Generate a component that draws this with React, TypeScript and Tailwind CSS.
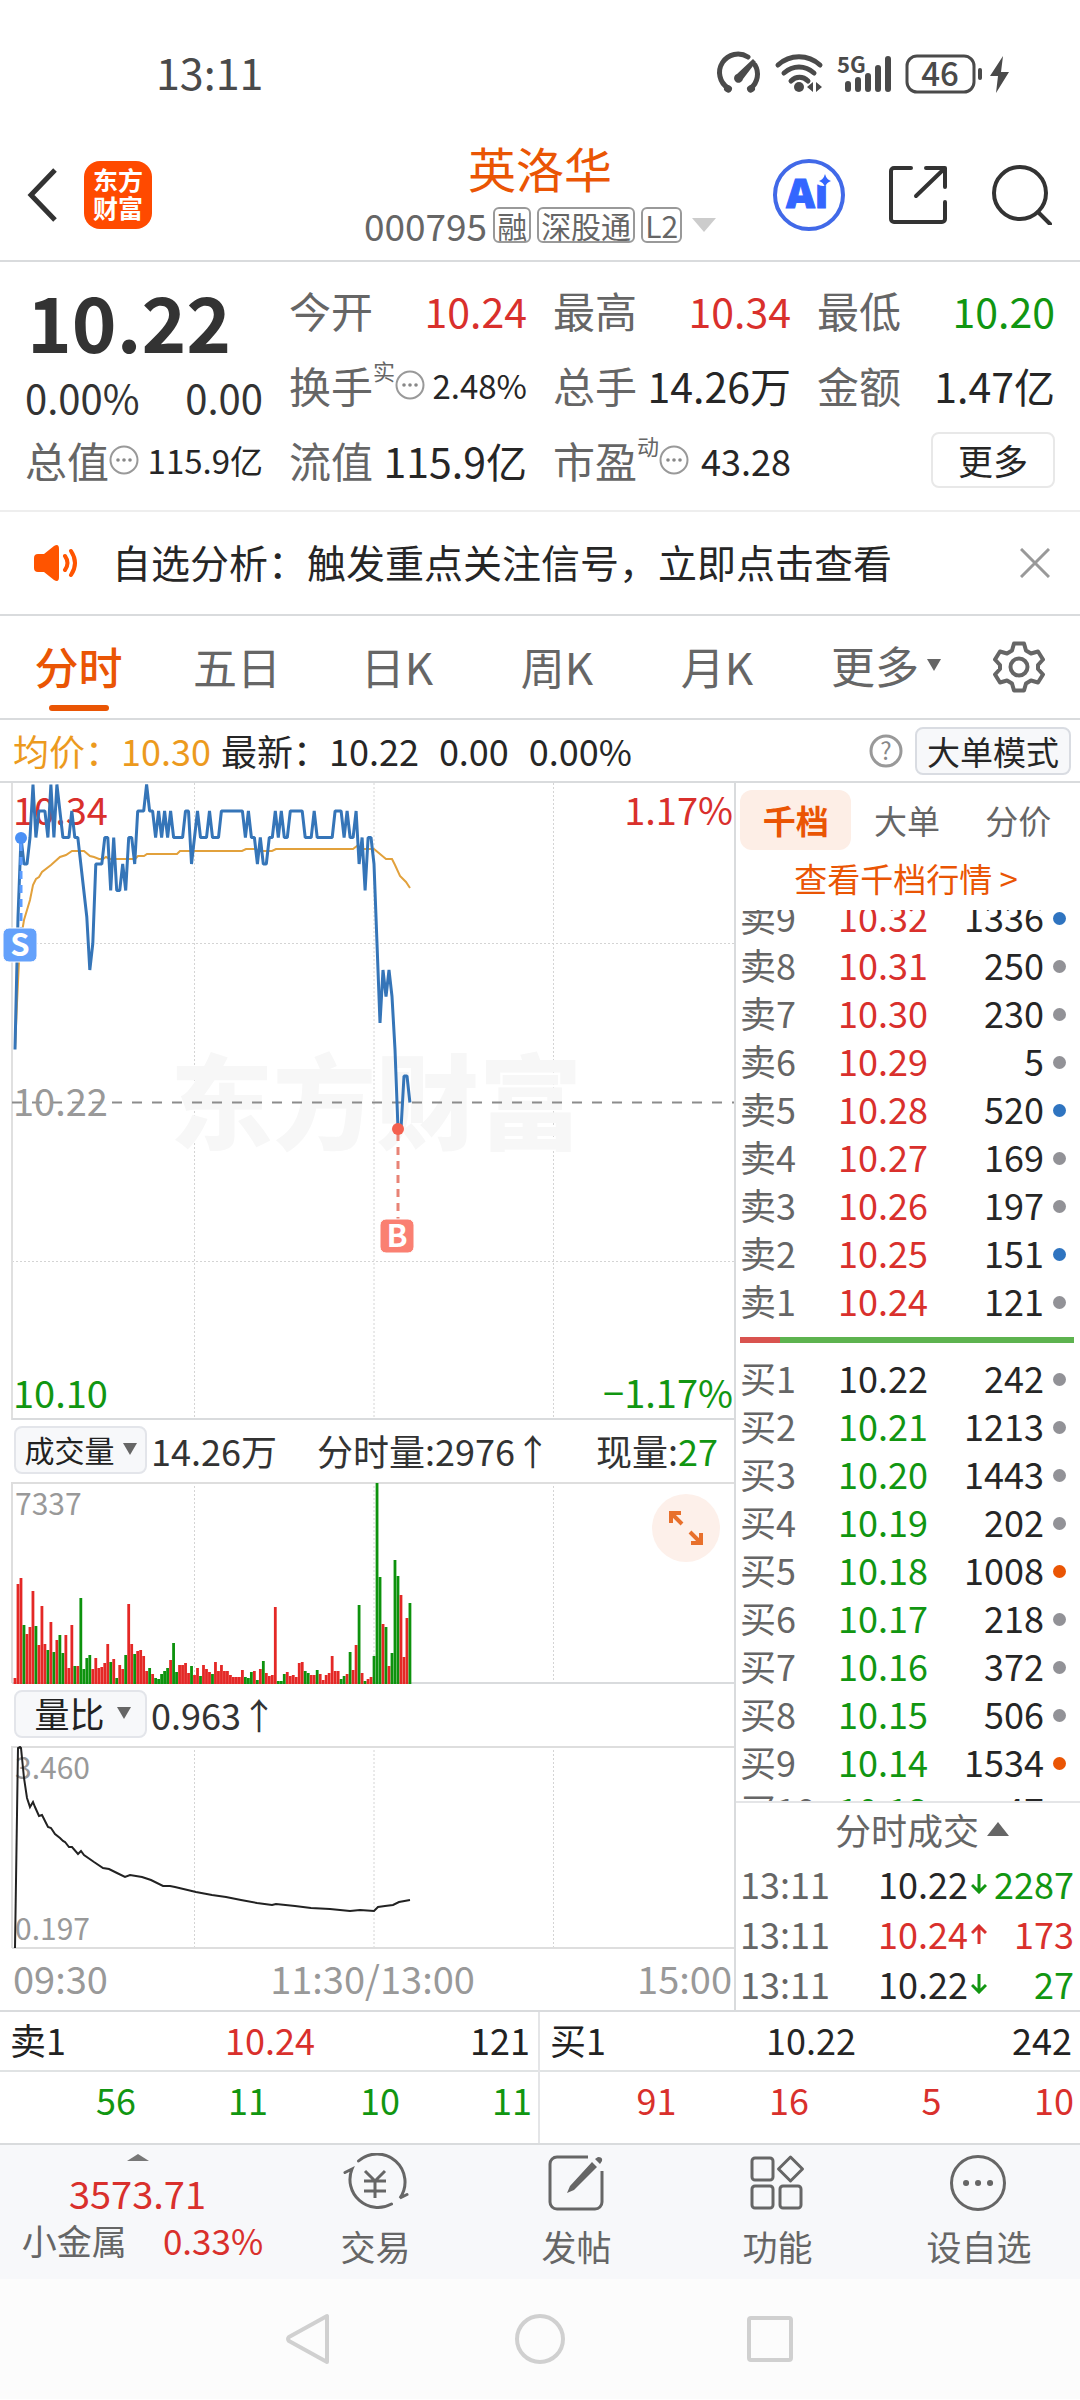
import React from "react";
import { clsx } from "clsx";

const RED = "text-[#d9302c]";
const GREEN = "text-[#119611]";
const DARK = "text-[#262626]";

/* ---------- data ---------- */

type Side = { name: string; price: string; volume: number; dot: string; tone: string };

const GRAY_DOT = "bg-[#929297]";
const BLUE_DOT = "bg-[#2f74c0]";
const ORANGE_DOT = "bg-[#ea5504]";

const sells: Side[] = [
  { name: "卖9", price: "10.32", volume: 1336, dot: BLUE_DOT, tone: RED },
  { name: "卖8", price: "10.31", volume: 250, dot: GRAY_DOT, tone: RED },
  { name: "卖7", price: "10.30", volume: 230, dot: GRAY_DOT, tone: RED },
  { name: "卖6", price: "10.29", volume: 5, dot: GRAY_DOT, tone: RED },
  { name: "卖5", price: "10.28", volume: 520, dot: BLUE_DOT, tone: RED },
  { name: "卖4", price: "10.27", volume: 169, dot: GRAY_DOT, tone: RED },
  { name: "卖3", price: "10.26", volume: 197, dot: GRAY_DOT, tone: RED },
  { name: "卖2", price: "10.25", volume: 151, dot: BLUE_DOT, tone: RED },
  { name: "卖1", price: "10.24", volume: 121, dot: GRAY_DOT, tone: RED },
];

const buys: Side[] = [
  { name: "买1", price: "10.22", volume: 242, dot: GRAY_DOT, tone: DARK },
  { name: "买2", price: "10.21", volume: 1213, dot: GRAY_DOT, tone: GREEN },
  { name: "买3", price: "10.20", volume: 1443, dot: GRAY_DOT, tone: GREEN },
  { name: "买4", price: "10.19", volume: 202, dot: GRAY_DOT, tone: GREEN },
  { name: "买5", price: "10.18", volume: 1008, dot: ORANGE_DOT, tone: GREEN },
  { name: "买6", price: "10.17", volume: 218, dot: GRAY_DOT, tone: GREEN },
  { name: "买7", price: "10.16", volume: 372, dot: GRAY_DOT, tone: GREEN },
  { name: "买8", price: "10.15", volume: 506, dot: GRAY_DOT, tone: GREEN },
  { name: "买9", price: "10.14", volume: 1534, dot: ORANGE_DOT, tone: GREEN },
  { name: "买10", price: "10.13", volume: 47, dot: GRAY_DOT, tone: GREEN },
];

const trades = [
  { time: "13:11", price: "10.22", up: false, volume: 2287, tone: DARK },
  { time: "13:11", price: "10.24", up: true, volume: 173, tone: RED },
  { time: "13:11", price: "10.22", up: false, volume: 27, tone: DARK },
];

// price per minute, in cents above 10.00
const prices = [
  24, 29, 32, 31, 31, 32, 34, 32, 33, 33, 33, 32, 34, 32, 34, 33, 32, 32, 32, 33,
  32, 32, 31, 30, 29, 27, 28, 31, 31, 31, 32, 32, 30, 32, 30, 30, 31, 30, 32, 32,
  31, 33, 33, 33, 34, 33, 33, 32, 33, 32, 33, 32, 33, 32, 32, 32, 32, 33, 33, 31,
  32, 33, 32, 32, 32, 33, 32, 32, 32, 33, 33, 33, 33, 33, 33, 33, 33, 32, 33, 32,
  32, 31, 32, 31, 31, 32, 32, 33, 32, 33, 32, 32, 33, 33, 33, 33, 33, 32, 32, 32,
  33, 32, 32, 32, 32, 32, 32, 33, 33, 33, 32, 33, 32, 32, 33, 31, 32, 30, 32, 32,
  31, 28, 25, 27, 26, 27, 26, 24, 21, 21, 23, 23, 22,
];

// bar height per minute; negative is a falling minute
const volumes = [
  6, 100, 106, -59, 50, 57, 93, -58, 39, 78, 40, -34, 62, -32, 44, -49, -31, 49,
  16, 59, -18, 18, -86, -15, -26, -29, 15, 26, 16, 17, 21, 40, -22, 25, -6, 19,
  15, -29, 80, 40, -30, 33, 34, 28, 13, -16, 10, -6, -5, -10, -13, -16, 24, -41,
  -12, 19, 19, 21, 11, -18, 9, 16, -8, 19, 15, 12, -10, 22, 13, 19, 13, 13, 9, 7,
  7, 7, 14, -7, -6, -12, 13, -4, 15, -23, 11, 8, 9, 77, -3, -3, -10, 12, 8, 9, 7,
  21, 22, -13, -11, 9, 9, -14, 10, 4, 9, 11, 28, 13, 13, -5, -8, 10, -32, 14, 39,
  -79, 11, -3, 5, 7, -28, -201, -107, 60, -57, 18, -31, -124, -108, 89, 27, 66, -81,
];

const minuteX = (i: number) => 15 + i * 2.992;

const pricePoints = prices
  .map((p, i) => `${minuteX(i).toFixed(1)},${(319.5 - (p - 22) * 26.5).toFixed(1)}`)
  .join(" ");

/* ---------- small pieces ---------- */

function MoreDots() {
  return (
    <svg viewBox="0 0 30 30" className="size-[30px] shrink-0" aria-hidden="true">
      <circle cx="15" cy="15" r="13.5" fill="none" stroke="#999" strokeWidth="2" />
      <circle cx="9" cy="15" r="1.8" fill="#888" />
      <circle cx="15" cy="15" r="1.8" fill="#888" />
      <circle cx="21" cy="15" r="1.8" fill="#888" />
    </svg>
  );
}

function Caret({ className }: { className?: string }) {
  return (
    <svg viewBox="0 0 14 12" className={clsx("h-3 w-3.5 shrink-0", className)} aria-hidden="true">
      <path d="M0 0h14L7 12z" fill="currentColor" />
    </svg>
  );
}

function StatusBar() {
  return (
    <div className="flex h-[130px] items-center justify-between pt-4 pr-[71px] pl-[156px] text-[#4a4a4a]">
      <span className="pb-1 text-[43px] leading-[48px]">13:11</span>
      <svg viewBox="0 0 292 44" className="h-11 w-[292px] overflow-visible" aria-hidden="true">
        <g fill="none" stroke="currentColor" strokeWidth="5" strokeLinecap="round">
          <path d="M11 37A18 18 0 0 1 31 6M38 14A18 18 0 0 1 34 37" />
          <path d="M10.500 37.500l1 .5M33.500 38l1-.5" strokeWidth="7" />
          <path d="M61 14C73 3 91 3 103 14M67 22C76 14 88 14 97 22M74 30C79 25 86 25 91 30" />
        </g>
        <path d="M36 8l3 3L26 28a4.500 4.500 0 1 1-6-5z" fill="currentColor" />
        <circle cx="82" cy="36" r="5" fill="currentColor" />
        <path d="M96 31v10l-6-5zM99 31v10l6-5z" fill="currentColor" />
        <text x="120" y="22" fontSize="22" fontWeight="700" fill="currentColor">
          5G
        </text>
        <g stroke="currentColor" strokeWidth="6" strokeLinecap="round">
          <path d="M131 33v5M141 29v9M151 25v13M161 17v21M171 8v30" />
        </g>
        <rect x="190" y="5" width="67" height="36" rx="10" fill="none" stroke="currentColor" strokeWidth="3" />
        <text x="223" y="35" fontSize="33" fontWeight="500" textAnchor="middle" fill="currentColor">
          46
        </text>
        <rect x="261" y="17" width="4" height="12" rx="2" fill="currentColor" />
        <path d="M286 5L273 25h8l-2 17 13-21h-8z" fill="currentColor" />
      </svg>
    </div>
  );
}

function Header() {
  return (
    <header className="grid h-[132px] grid-cols-[1fr_auto_1fr] items-center border-b-2 border-[#d9dbdd]">
      <div className="flex items-center gap-6 pl-6">
        <button type="button" aria-label="返回">
          <svg viewBox="0 0 36 60" className="h-[60px] w-9">
            <path d="M31 5L7 30l24 25" fill="none" stroke="#333" strokeWidth="5" />
          </svg>
        </button>
        <div className="flex size-[68px] flex-col items-center justify-center rounded-2xl bg-[#ff4a00] pb-1 text-[25px] leading-[28px] font-bold text-white">
          <span>东方</span>
          <span>财富</span>
        </div>
      </div>
      <div className="flex flex-col items-center pb-3">
        <h1 className="text-5xl leading-[72px] text-[#ea5504]">英洛华</h1>
        <div className="flex items-center gap-1.5 text-[#666]">
          <span className="text-[37px] leading-[44px]">000795</span>
          <span className="rounded-md border-2 border-[#999] px-0.5 text-[30px] leading-[32px]">融</span>
          <span className="rounded-md border-2 border-[#999] px-0.5 text-[30px] leading-[32px]">深股通</span>
          <span className="rounded-md border-2 border-[#999] px-0.5 text-[30px] leading-[32px]">L2</span>
          <svg viewBox="0 0 24 14" className="ml-1 h-3.5 w-6" aria-hidden="true">
            <path d="M0 0h24L12 14z" fill="#ccc" />
          </svg>
        </div>
      </div>
      <div className="flex items-center justify-end gap-[43px] pr-[28px]">
        <button type="button" aria-label="Ai">
          <svg viewBox="0 0 74 74" className="size-[74px]">
            <circle cx="37" cy="37" r="34" fill="#fff" stroke="#4169e8" strokeWidth="4" />
            <text
              x="35"
              y="50"
              textAnchor="middle"
              fontSize="40"
              fontWeight="900"
              fill="#3366ff"
              stroke="#3366ff"
              strokeWidth="1"
              className="font-['Noto_Sans','Open_Sans',sans-serif]"
            >
              Ai
            </text>
            <circle cx="51" cy="20" r="8" fill="#fff" />
            <path d="M53 16q1.500 5.500 6 7-4.500 1.500-6 6-1.500-4.500-6-6 4.500-1.500 6-7z" fill="#3366ff" />
          </svg>
        </button>
        <button type="button" aria-label="分享">
          <svg viewBox="0 0 60 60" className="size-[60px]">
            <g fill="none" stroke="#333" strokeWidth="4" strokeLinecap="round" strokeLinejoin="round">
              <path d="M22 3H5a3 3 0 0 0-3 3v48a3 3 0 0 0 3 3h48a3 3 0 0 0 3-3V37" />
              <path d="M37 3h19v19M55 4L27 31" />
            </g>
          </svg>
        </button>
        <button type="button" aria-label="搜索">
          <svg viewBox="0 0 60 60" className="size-[60px]">
            <g fill="none" stroke="#333" strokeWidth="4" strokeLinecap="round">
              <circle cx="28" cy="28" r="26" />
              <path d="M46 47l12 12" />
            </g>
          </svg>
        </button>
      </div>
    </header>
  );
}

interface QuoteItemProps {
  label: string;
  value: string;
  mark?: string;
  dots?: boolean;
  tone?: string;
  size?: string;
}

function QuoteItem({ label, value, mark, dots, tone = DARK, size = "text-[41px]" }: QuoteItemProps) {
  return (
    <div className="flex h-[75px] items-center justify-between pb-0.5">
      <span className="flex items-center text-[42px] leading-[50px] text-[#666]">
        {label}
        {mark && <span className="self-start text-[22px] leading-[20px]">{mark}</span>}
        {dots && <MoreDots />}
      </span>
      <span className={clsx("leading-[50px] whitespace-nowrap", size, tone)}>{value}</span>
    </div>
  );
}

function Quote() {
  return (
    <section className="grid grid-cols-4 gap-x-[26px] border-b-2 border-[#eee] px-[25px] pt-[11px] pb-3">
      <div>
        <div className="h-[100px] pl-0.5 text-[76px] leading-[94px] font-bold text-[#333]">10.22</div>
        <div className="flex h-[50px] items-center justify-between pb-0.5 text-[40px] leading-[50px] text-[#333]">
          <span>0.00%</span>
          <span>0.00</span>
        </div>
        <QuoteItem label="总值" value="115.9亿" dots size="text-[33px]" />
      </div>
      <div>
        <QuoteItem label="今开" value="10.24" tone={RED} />
        <QuoteItem label="换手" value="2.48%" mark="实" dots size="text-[33px]" />
        <QuoteItem label="流值" value="115.9亿" />
      </div>
      <div>
        <QuoteItem label="最高" value="10.34" tone={RED} />
        <QuoteItem label="总手" value="14.26万" />
        <QuoteItem label="市盈" value="43.28" mark="动" dots size="text-[36px]" />
      </div>
      <div>
        <QuoteItem label="最低" value="10.20" tone={GREEN} />
        <QuoteItem label="金额" value="1.47亿" />
        <div className="flex h-[75px] items-center justify-end pb-0.5">
          <button
            type="button"
            className="h-14 w-[124px] rounded-lg border-2 border-[#e8e8e8] text-[35px] leading-[50px] text-[#262626]"
          >
            更多
          </button>
        </div>
      </div>
    </section>
  );
}

function Notice() {
  return (
    <div className="flex h-[104px] items-center border-b-2 border-[#d9dbdd] pr-[30px] pl-[34px]">
      <svg viewBox="0 0 46 38" className="h-[38px] w-[46px]" aria-hidden="true">
        <path d="M4 10h6L20 2q5-3 5 3v28q0 6-5 3L10 28H4q-4 0-4-4V14q0-4 4-4z" fill="#ff5400" />
        <path d="M31 12q5 7 0 14M37 7q8 12 0 24" fill="none" stroke="#ff5400" strokeWidth="4" strokeLinecap="round" />
      </svg>
      <a href="#analysis" className="ml-8 flex-1 pb-1 text-[39px] leading-[50px] text-[#262626]">
        自选分析：触发重点关注信号，立即点击查看
      </a>
      <button type="button" aria-label="关闭">
        <svg viewBox="0 0 30 30" className="size-[30px]">
          <path d="M1 1l28 28M29 1L1 29" stroke="#999" strokeWidth="3" />
        </svg>
      </button>
    </div>
  );
}

const tabs = ["分时", "五日", "日K", "周K", "月K"];

function Tabs() {
  return (
    <nav className="grid h-[104px] grid-cols-[157fr_160fr_160fr_160fr_160fr_178fr_105fr] border-b-2 border-[#d9dbdd] text-[44px] leading-[60px] text-[#666]">
      {tabs.map((tab, i) => (
        <button
          key={tab}
          type="button"
          className={clsx("flex flex-col items-center pt-5", i === 0 && "font-medium text-[#ea5504]")}
        >
          {tab}
          {i === 0 && <span className="mt-[9px] h-1.5 w-[60px] rounded-full bg-[#ea5504]" />}
        </button>
      ))}
      <button type="button" className="flex items-center justify-center gap-2 pb-1">
        更多
        <Caret />
      </button>
      <button type="button" aria-label="设置" className="flex items-center justify-center pr-[18px]">
        <svg viewBox="0 0 52 52" className="size-[52px]">
          <g fill="none" stroke="#666" strokeWidth="4" strokeLinejoin="round">
            <path d="M21 2.500h10l2 7 5 3 7-2 5 8-5 5.500v4l5 5.500-5 8-7-2-5 3-2 7H21l-2-7-5-3-7 2-5-8 5-5.500v-4l-5-5.500 5-8 7 2 5-3z" />
            <circle cx="26" cy="26" r="8.500" />
          </g>
        </svg>
      </button>
    </nav>
  );
}

function InfoRow() {
  return (
    <div className="flex h-[63px] items-center border-b-2 border-[#d9dbdd] pr-[9px] pl-[13px] text-[36px] leading-[50px] text-[#262626]">
      <div className="flex pb-0.5">
        <span className="text-[#ec9a1e]">均价：10.30</span>
        <span className="ml-2.5">最新：10.22</span>
        <span className="ml-5">0.00</span>
        <span className="ml-5">0.00%</span>
      </div>
      <button type="button" aria-label="说明" className="ml-auto">
        <svg viewBox="0 0 34 34" className="size-[34px] overflow-visible">
          <circle cx="17" cy="17" r="15" fill="none" stroke="#999" strokeWidth="3" />
          <text x="17" y="26" fontSize="24" textAnchor="middle" fill="#888">
            ?
          </text>
        </svg>
      </button>
      <button
        type="button"
        className="ml-3 h-12 rounded-lg border-2 border-[#d9dce2] bg-[#f7f8fa] px-2.5 text-[33px] leading-[44px]"
      >
        大单模式
      </button>
    </div>
  );
}

/* ---------- charts ---------- */

function VerticalGrid({ height }: { height: number }) {
  return (
    <g stroke="#d4d4d4" strokeWidth="1" strokeDasharray="2 2">
      <path d={`M194.500 0v${height}M374 0v${height}M553.500 0v${height}`} />
    </g>
  );
}

function PriceChart() {
  return (
    <svg viewBox="0 0 734 637" className="block w-full" role="img" aria-label="分时走势">
      <VerticalGrid height={637} />
      <path d="M12 160.500h722M12 478.500h722" stroke="#d4d4d4" strokeDasharray="2 2" />
      <text x="376" y="359" fontSize="103" fontWeight="900" textAnchor="middle" fill="#f7f7f7">
        东方财富
      </text>
      <path d="M12 0v637" stroke="#e0e0e0" strokeWidth="2" />
      <path d="M12 636h722" stroke="#d9dbdd" strokeWidth="2" />
      <path d="M12 319.500h722" stroke="#8c8c8c" strokeWidth="2" strokeDasharray="10 10" />
      <polyline
        points="15,266 17,220 20,157 22,149 24,137 27,127 30,117 33,102 36,96 39,94 42,89 51,82 60,74 66,72 72,68 84,68 90,73 94,74 99,76 103,76 106,74 110,76 135,76 138,73 144,73 147,71 177,71 180,68 242,68 246,66 255,66 261,68 272,68 276,66 353,66 357,63 362,66 374,66 386,76 392,76 395,82 400,93 406,99 410,105"
        fill="none"
        stroke="#e2a13c"
        strokeWidth="2"
      />
      <text x="13" y="42" fontSize="38" fill="#d9302c">
        10.34
      </text>
      <text x="13" y="333" fontSize="38" fill="#999">
        10.22
      </text>
      <text x="13" y="625" fontSize="38" fill="#119611">
        10.10
      </text>
      <text x="733" y="42" fontSize="38" textAnchor="end" fill="#d9302c">
        1.17%
      </text>
      <text x="733" y="625" fontSize="38" textAnchor="end" fill="#119611">
        −1.17%
      </text>
      <polyline points={pricePoints} fill="none" stroke="#3575b8" strokeWidth="3" strokeLinejoin="bevel" />
      <path d="M21 60v85" stroke="#5a9cff" strokeWidth="3" strokeDasharray="8 6" />
      <circle cx="21" cy="55" r="6" fill="#4a90f5" />
      <rect x="3" y="145" width="34" height="34" rx="6" fill="#64a1fb" stroke="#fff" />
      <text x="20" y="173" fontSize="31" fontWeight="700" textAnchor="middle" fill="#fff">
        S
      </text>
      <path d="M398 350v86" stroke="#e88376" strokeWidth="3" strokeDasharray="8 6" />
      <circle cx="398" cy="346" r="6" fill="#f4604f" />
      <rect x="380" y="436" width="34" height="34" rx="6" fill="#fa8072" stroke="#fff" />
      <text x="397" y="464" fontSize="31" fontWeight="700" textAnchor="middle" fill="#fff">
        B
      </text>
    </svg>
  );
}

function VolumeChart() {
  return (
    <svg viewBox="0 0 734 202" className="block w-full" role="img" aria-label="成交量">
      <VerticalGrid height={202} />
      <path d="M12 201V1h722" fill="none" stroke="#dedede" strokeWidth="2" />
      <path d="M12 201h722" stroke="#d9dbdd" strokeWidth="2" />
      {volumes.map((v, i) => (
        <rect
          key={i}
          x={minuteX(i) - 1.4}
          y={202 - Math.abs(v)}
          width="2.8"
          height={Math.abs(v)}
          fill={v < 0 ? "#0d920d" : "#e42826"}
        />
      ))}
      <text x="15" y="33" fontSize="30" fill="#999">
        7337
      </text>
    </svg>
  );
}

function RatioChart() {
  return (
    <svg viewBox="0 0 734 203" className="block w-full" role="img" aria-label="量比">
      <VerticalGrid height={203} />
      <path d="M12 202V1h722" fill="none" stroke="#dedede" strokeWidth="2" />
      <path d="M12 202h722" stroke="#dedede" strokeWidth="2" />
      <text x="15" y="33" fontSize="30" fill="#999">
        3.460
      </text>
      <text x="15" y="194" fontSize="30" fill="#999">
        0.197
      </text>
      <polyline
        points="15,202 18,2 20,1 21,2 24,32 27,52 30,61 33,56 35,61 39,70 42,69 45,75 48,81 51,82 55,88 60,92 63,95 65,96 69,101 72,101 78,108 81,105 84,109 94,116 103,122 109,123 117,127 125,131 130,129 142,131 151,134 163,140 170,140 175,141 196,146 212,149 226,151 241,154 257,157 272,159 276,158 295,160 311,162 330,163 350,165 360,164 374,165 378,161 385,160 393,159 399,156 410,154"
        fill="none"
        stroke="#222"
        strokeWidth="2"
      />
    </svg>
  );
}

function IndicatorButton({ children }: { children: React.ReactNode }) {
  return (
    <button
      type="button"
      className="flex h-12 w-[133px] items-center justify-center gap-2 rounded-lg border-2 border-[#e3e5ea] bg-[#f7f8fa] pb-0.5 text-[#222]"
    >
      {children}
      <Caret className="text-[#666]" />
    </button>
  );
}

function Charts() {
  return (
    <section className="min-w-0 flex-1">
      <PriceChart />
      <div className="flex h-[62px] items-center pr-4 pb-0.5 pl-[14px] text-[36px] leading-[48px] text-[#333]">
        <IndicatorButton>
          <span className="text-[30px] leading-[40px]">成交量</span>
        </IndicatorButton>
        <span className="ml-1">14.26万</span>
        <span className="ml-10">分时量:2976↑</span>
        <span className="ml-auto">
          现量:<span className={GREEN}>27</span>
        </span>
      </div>
      <div className="relative">
        <VolumeChart />
        <button
          type="button"
          aria-label="全屏"
          className="absolute top-3 right-3.5 flex size-[68px] items-center justify-center rounded-full bg-[#fdf0ea]"
        >
          <svg viewBox="0 0 36 36" className="size-9">
            <g fill="none" stroke="#e8702c" strokeWidth="4">
              <path d="M3 13V3h10M3 3l11 11M33 23v10H23M33 33L22 22" />
            </g>
          </svg>
        </button>
      </div>
      <div className="flex h-[62px] items-center gap-1 pb-0.5 pl-[14px] text-[36px] leading-[48px] text-[#333]">
        <IndicatorButton>
          <span className="px-1 text-[35px] leading-[44px]">量比</span>
        </IndicatorButton>
        <span>0.963↑</span>
      </div>
      <RatioChart />
      <div className="flex h-[61px] items-center justify-between pr-0.5 pb-1 pl-[13px] text-[38px] leading-[50px] text-[#999]">
        <span>09:30</span>
        <span>11:30/13:00</span>
        <span>15:00</span>
      </div>
    </section>
  );
}

/* ---------- order book ---------- */

function DepthTable({ rows, label }: { rows: Side[]; label: string }) {
  return (
    <table aria-label={label} className="w-full table-fixed border-collapse text-[36px] leading-[44px]">
      <colgroup>
        <col className="w-[98px]" />
        <col className="w-[92px]" />
        <col />
        <col className="w-[30px]" />
      </colgroup>
      <tbody>
        {rows.map((row) => (
          <tr key={row.name} className="h-12">
            <th scope="row" className="p-0 pb-1 text-left font-normal whitespace-nowrap text-[#666]">
              {row.name}
            </th>
            <td className={clsx("p-0 pb-1", row.tone)}>{row.price}</td>
            <td className="p-0 pb-1 text-right text-[#262626]">{row.volume}</td>
            <td className="p-0">
              <span className={clsx("mx-auto block size-[13px] rounded-full", row.dot)} />
            </td>
          </tr>
        ))}
      </tbody>
    </table>
  );
}

function OrderBook() {
  return (
    <aside className="flex w-[346px] shrink-0 flex-col border-l-2 border-[#d9dbdd]">
      <div className="grid grid-cols-3 pt-[7px] pr-1.5 pl-1 text-[33px] leading-[60px] text-[#666]">
        <button type="button" className="rounded-xl bg-[#fdeee6] font-bold text-[#ea5504]">
          千档
        </button>
        <button type="button">大单</button>
        <button type="button">分价</button>
      </div>
      <a href="#depth" className="pt-1 pr-1 pb-2 text-center text-[33px] leading-[48px] text-[#ea5504]">
        查看千档行情 &gt;
      </a>
      <div className="h-[891px] overflow-hidden pr-1.5 pl-1">
        <div className="-mt-4">
          <DepthTable rows={sells} label="卖盘" />
        </div>
        <div className="mt-[11px] mb-3 flex h-1.5">
          <span className="w-[12%] bg-[#d9534f]" />
          <span className="flex-1 bg-[#5db34f]" />
        </div>
        <DepthTable rows={buys} label="买盘" />
      </div>
      <button
        type="button"
        className="flex h-[58px] items-center justify-center gap-2 border-t-2 border-[#e4e5e7] pb-1 pl-7 text-[36px] leading-[50px] text-[#666]"
      >
        分时成交
        <svg viewBox="0 0 22 14" className="h-3.5 w-[22px]" aria-hidden="true">
          <path d="M0 14h22L11 0z" fill="currentColor" />
        </svg>
      </button>
      <table aria-label="分时成交" className="mr-1.5 ml-1 border-collapse text-[36px] leading-[48px]">
        <tbody>
          {trades.map((t, i) => (
            <tr key={i}>
              <td className="p-0 pb-0.5 text-[#666]">{t.time}</td>
              <td className={clsx("p-0 pb-0.5 text-right", t.tone)}>{t.price}</td>
              <td className="w-[22px] p-0">
                <svg viewBox="0 0 16 20" className={clsx("mx-auto h-5 w-4", t.up ? RED : GREEN)}>
                  <path
                    d={t.up ? "M8 20V3M1 9l7-7 7 7" : "M8 0v17M1 11l7 7 7-7"}
                    fill="none"
                    stroke="currentColor"
                    strokeWidth="3"
                  />
                </svg>
              </td>
              <td className={clsx("w-[84px] p-0 pb-0.5 text-right", t.up ? RED : GREEN)}>{t.volume}</td>
            </tr>
          ))}
        </tbody>
      </table>
    </aside>
  );
}

interface BestQuoteProps {
  name: string;
  price: string;
  volume: number;
  tone: string;
  queue: number[];
  queueTone: string;
}

function BestQuote({ name, price, volume, tone, queue, queueTone }: BestQuoteProps) {
  return (
    <div className="text-[36px] leading-[50px] text-[#222]">
      <div className="grid h-[60px] grid-cols-3 items-center border-b-2 border-[#e0e3e4] pr-2 pb-1 pl-2.5">
        <span>{name}</span>
        <span className={clsx("text-center", tone)}>{price}</span>
        <span className="text-right">{volume}</span>
      </div>
      <div className={clsx("grid h-[71px] grid-cols-4 pt-0.5 pr-1.5 pl-1 text-right", queueTone)}>
        {queue.map((n, i) => (
          <span key={i}>{n}</span>
        ))}
      </div>
    </div>
  );
}

/* ---------- bottom bars ---------- */

const actions = [
  {
    label: "交易",
    icon: (
      <g strokeLinecap="round">
        <path d="M13.500 8A28 28 0 0 1 55 45l7-3.500M46.500 51A28 28 0 0 1 7 16l-7 3.500" />
        <path d="M20 18l10 10 10-10M19 28h22M19 38h22M30 28v17" strokeLinecap="butt" />
      </g>
    ),
  },
  {
    label: "发帖",
    icon: (
      <>
        <path d="M42 4H11a7 7 0 0 0-7 7v38a7 7 0 0 0 7 7h38a7 7 0 0 0 7-7V18" />
        <path d="M46 9l5 5-23 23-7 3 3-7zM49 6l3-2q5 0 4 4l-2 3z" fill="#666" stroke="none" />
      </>
    ),
  },
  {
    label: "功能",
    icon: (
      <>
        <rect x="5" y="5" width="21" height="22" rx="3" />
        <rect x="5" y="33" width="21" height="22" rx="3" />
        <rect x="33" y="33" width="21" height="22" rx="3" />
        <path d="M43.500 4l12 12-12 12-12-12z" strokeLinejoin="round" />
      </>
    ),
  },
  {
    label: "设自选",
    icon: (
      <>
        <circle cx="30" cy="30" r="26.500" />
        <path d="M18 30h.1M30 30h.1M42 30h.1" strokeWidth="6" strokeLinecap="round" />
      </>
    ),
  },
];

function ActionBar() {
  return (
    <footer className="grid h-[136px] grid-cols-[275fr_201fr_201fr_201fr_202fr] border-t-2 border-[#d9dbdd] bg-[#f7f8fa]">
      <button type="button" className="flex flex-col items-center pt-[9px]">
        <svg viewBox="0 0 22 7" className="h-[7px] w-[22px]" aria-hidden="true">
          <path d="M0 7h22L11 0z" fill="#777" />
        </svg>
        <span className={clsx("mt-2 text-[38px] leading-[48px]", RED)}>3573.71</span>
        <span className="flex items-center gap-9 pl-2.5 text-[35px] leading-[46px]">
          <span className="text-[#666]">小金属</span>
          <span className={RED}>0.33%</span>
        </span>
      </button>
      {actions.map((action) => (
        <button
          key={action.label}
          type="button"
          className="flex flex-col items-center pt-2 text-[35px] leading-[50px] text-[#666]"
        >
          <svg viewBox="-2 0 66 60" className="mb-2 h-[60px] w-[66px]">
            <g fill="none" stroke="#666" strokeWidth="3">
              {action.icon}
            </g>
          </svg>
          {action.label}
        </button>
      ))}
    </footer>
  );
}

function SystemNav() {
  return (
    <div className="flex h-[120px] items-center justify-center gap-[178px] bg-[#fcfcfc]">
      <button type="button" aria-label="后退">
        <svg viewBox="0 0 52 52" className="size-[52px]">
          <path d="M43 3v46L5 28q-2-2 0-4z" fill="none" stroke="#d0d0d0" strokeWidth="4" strokeLinejoin="round" />
        </svg>
      </button>
      <button type="button" aria-label="主屏幕">
        <svg viewBox="0 0 52 52" className="size-[52px]">
          <circle cx="26" cy="26" r="23" fill="none" stroke="#d0d0d0" strokeWidth="4" />
        </svg>
      </button>
      <button type="button" aria-label="最近任务">
        <svg viewBox="0 0 52 52" className="size-[52px]">
          <rect x="5" y="5" width="42" height="42" rx="2" fill="none" stroke="#d0d0d0" strokeWidth="4" />
        </svg>
      </button>
    </div>
  );
}

export default function App() {
  return (
    <div className="min-h-screen bg-white font-['Noto_Sans_CJK_SC',sans-serif]">
      <StatusBar />
      <Header />
      <Quote />
      <Notice />
      <Tabs />
      <InfoRow />
      <main className="flex">
        <Charts />
        <OrderBook />
      </main>
      <section className="grid grid-cols-2 divide-x-2 divide-[#e4e5e7] border-t-2 border-[#d9dbdd]">
        <BestQuote name="卖1" price="10.24" volume={121} tone={RED} queue={[56, 11, 10, 11]} queueTone={GREEN} />
        <BestQuote name="买1" price="10.22" volume={242} tone={DARK} queue={[91, 16, 5, 10]} queueTone={RED} />
      </section>
      <ActionBar />
      <SystemNav />
    </div>
  );
}
